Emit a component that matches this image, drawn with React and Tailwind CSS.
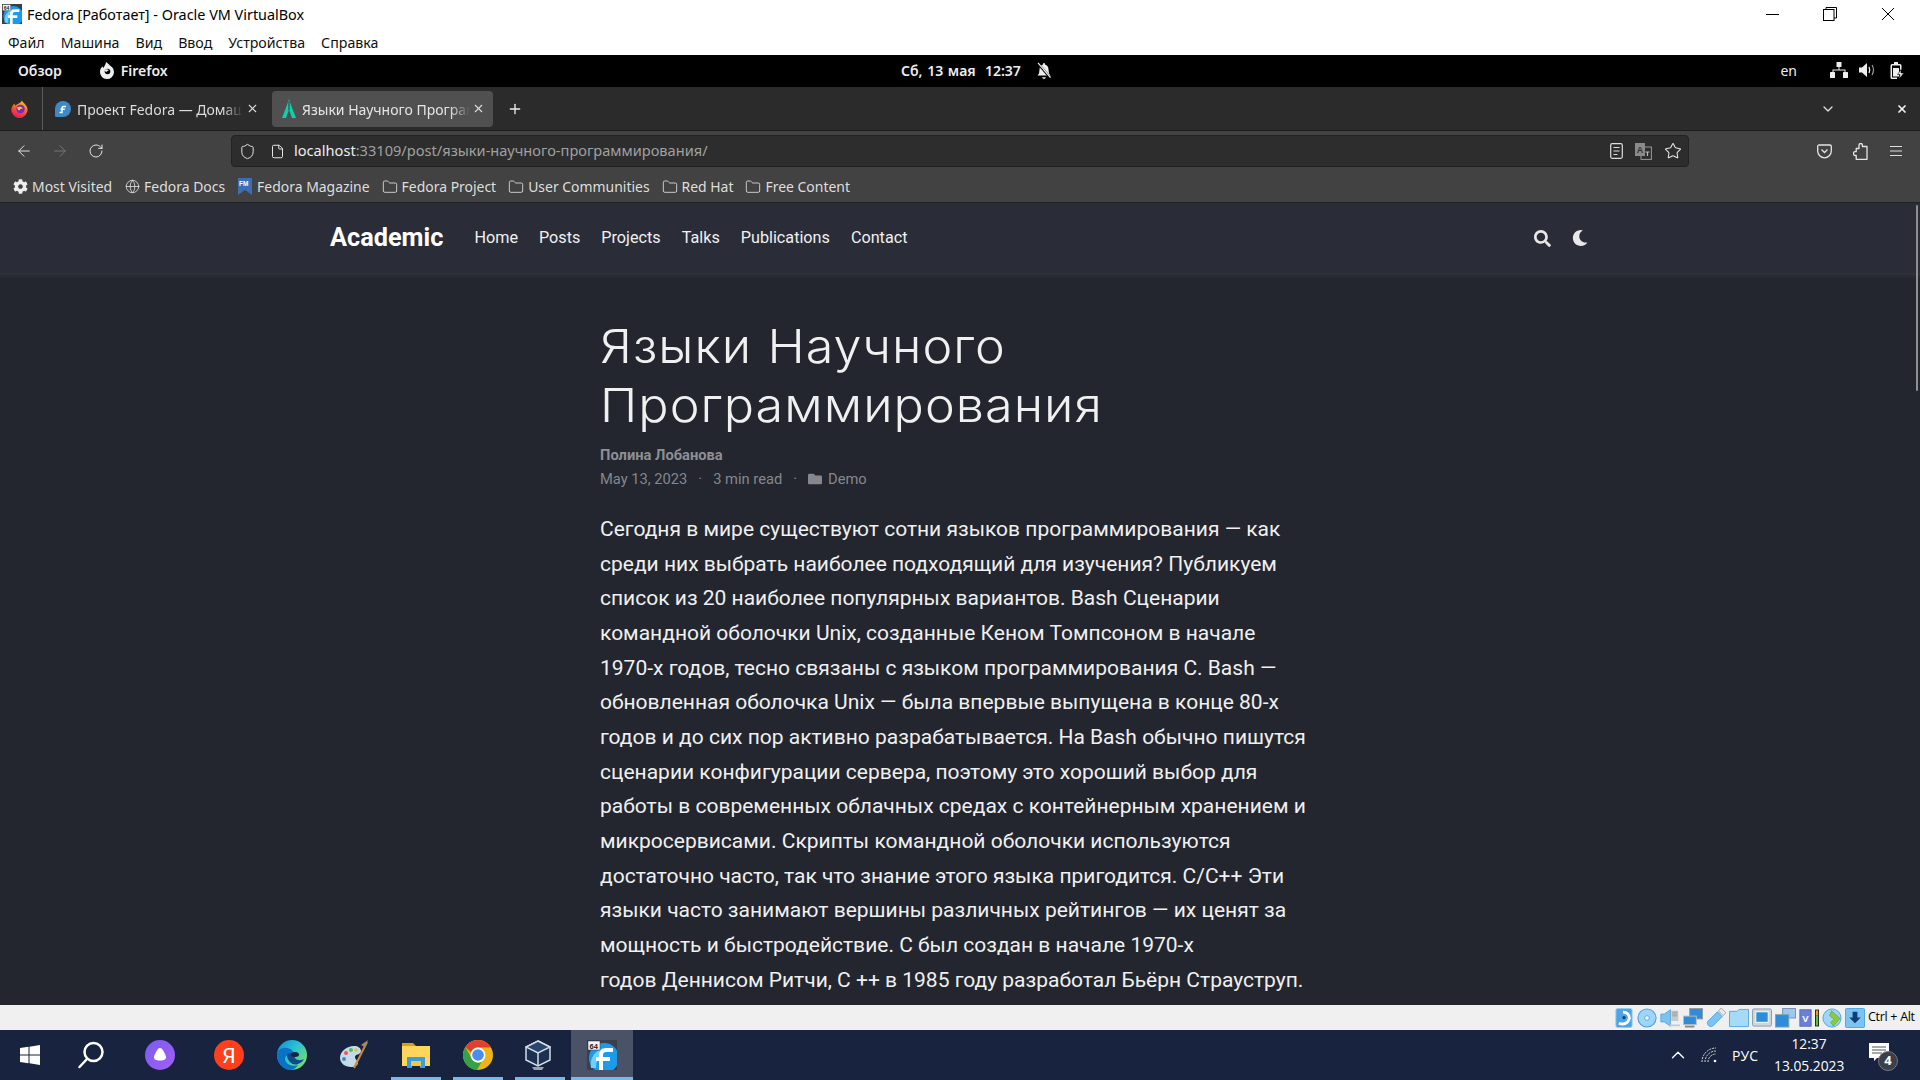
import React from "react";
import { ArrowLeft, ArrowRight, RotateCw, Shield, File, Star, Plus, X, ChevronDown, Globe, Folder, ChevronUp } from "lucide-react";
import { FaSearch, FaMoon, FaFolder, FaCog } from "react-icons/fa";

const lines = [
  "Сегодня в мире существуют сотни языков программирования — как",
  "среди них выбрать наиболее подходящий для изучения? Публикуем",
  "список из 20 наиболее популярных вариантов. Bash Сценарии",
  "командной оболочки Unix, созданные Кеном Томпсоном в начале",
  "1970-х годов, тесно связаны с языком программирования C. Bash —",
  "обновленная оболочка Unix — была впервые выпущена в конце 80-х",
  "годов и до сих пор активно разрабатывается. На Bash обычно пишутся",
  "сценарии конфигурации сервера, поэтому это хороший выбор для",
  "работы в современных облачных средах с контейнерным хранением и",
  "микросервисами. Скрипты командной оболочки используются",
  "достаточно часто, так что знание этого языка пригодится. C/C++ Эти",
  "языки часто занимают вершины различных рейтингов — их ценят за",
  "мощность и быстродействие. C был создан в начале 1970-х",
  "годов Деннисом Ритчи, C ++ в 1985 году разработал Бьёрн Страуструп.",
];

const FedoraBlue = ({ s = 16 }) => (
  <svg width={s} height={s} viewBox="0 0 16 16">
    <path d="M8 0a8 8 0 0 1 0 16H1.500A1.500 1.500 0 0 1 0 14.500V8a8 8 0 0 1 8-8z" fill="#3c8ac9" />
    <path d="M4.500 11.500H7V7.200a1.600 1.600 0 0 1 1.600-1.600H11M5.500 8.200H9.800" fill="none" stroke="#fff" strokeWidth="1.500" />
  </svg>
);

const VBoxFedora = ({ s = 24 }) => (
  <svg width={s} height={s} viewBox="0 0 30 30">
    <rect width="30" height="30" fill="#3a3f4d" />
    <circle cx="17" cy="18" r="15" fill="#1e9be8" />
    <path d="M4 28 Q2 14 16 8 L16 14 Q9 17 9 28z" fill="#6fd0fb" />
    <path d="M14 30V15a5 5 0 0 1 5-5h7M9 19h14" fill="none" stroke="#fff" strokeWidth="4" />
    <rect x="1" y="1" width="12" height="9" fill="#f5f5f5" stroke="#333" strokeWidth="0.500" />
    <text x="2.500" y="8.500" fontSize="7.500" fontWeight="700" fill="#222" fontFamily="Liberation Sans, sans-serif">64</text>
  </svg>
);

const FirefoxIcon = () => (
  <svg width="18" height="18" viewBox="0 0 18 18">
    <defs>
      <linearGradient id="ff" x1="0.7" y1="0" x2="0.3" y2="1">
        <stop offset="0" stopColor="#ffc02c" />
        <stop offset="0.5" stopColor="#ff5a2d" />
        <stop offset="1" stopColor="#e3145a" />
      </linearGradient>
    </defs>
    <path d="M11 0.500c.5 2 2.500 2.600 3.600 4.600C16.600 7 17 10 16 12.500A8 8 0 1 1 1.800 5.500C2.300 4.600 3 4 3.500 3.500c0 1 .3 1.600 1 2C6 3.800 9.500 3.500 11 .5z" fill="url(#ff)" />
    <circle cx="9.500" cy="9" r="4.200" fill="#6c2bd0" />
    <path d="M6 7.500c2-1.500 5-1 6 1-1.500 0-3 .5-3.500 2-1 .2-2-.8-2.500-3z" fill="#ffb92e" />
  </svg>
);

const AcademicIcon = () => (
  <svg width="16" height="20" viewBox="0 0 16 20">
    <path d="M8 0l2 6 5 13h-4L8 10.500 5 19H1L6 6z" fill="#0fd0a8" />
    <path d="M7.300 2h1.400v9H7.300z" fill="#2c5f5c" />
  </svg>
);

const Bell = () => (
  <svg width="16" height="17" viewBox="0 0 16 17" fill="#eee">
    <path d="M8 1a1 1 0 0 1 1 1v.6c2.200.6 3.500 2.500 3.500 5l.5 4 1.500 2H1.500l1.500-2 .5-4c0-2.500 1.300-4.400 3.500-5V2a1 1 0 0 1 1-1z" />
    <path d="M6 15.200h4l-1 1.500H7z" />
    <path d="M2 1.500l12 14" stroke="#000" strokeWidth="2.500" />
    <path d="M2 .8l12.500 14.700" stroke="#eee" strokeWidth="1.200" />
  </svg>
);

const Net = () => (
  <svg width="18" height="16" viewBox="0 0 18 16" fill="#eee">
    <rect x="6.500" y="0" width="5" height="5" rx="0.500" />
    <rect x="0" y="10" width="5" height="6" rx="0.500" />
    <rect x="13" y="10" width="5" height="6" rx="0.500" />
    <path d="M8.500 5h1v2.500h6V10h-1V8.500h-11V10h-1V7.500h6z" />
  </svg>
);

const Speaker = () => (
  <svg width="17" height="16" viewBox="0 0 17 16">
    <path d="M0 5.500h3L8 1v14l-5-4.500H0z" fill="#eee" />
    <path d="M10 5c1 2 1 4 0 6" stroke="#eee" strokeWidth="1.300" fill="none" />
    <path d="M13 3c1.800 3 1.800 7 0 10" stroke="#999" strokeWidth="1.200" fill="none" />
  </svg>
);

const Battery = () => (
  <svg width="15" height="17" viewBox="0 0 15 17">
    <path d="M4 0h4v2h2a1.500 1.500 0 0 1 1.500 1.500V8H10V3.500H2v12h5V17H2a1.500 1.500 0 0 1-1.500-1.500v-12A1.500 1.500 0 0 1 2 2h2z" fill="#eee" />
    <rect x="3" y="6" width="6" height="8.500" fill="#eee" />
    <path d="M11 7.500L7.500 12.500h2.500L9 17l5-6h-3z" fill="#eee" stroke="#000" strokeWidth="0.600" />
  </svg>
);

const SoftFirefox = () => (
  <svg width="16" height="17" viewBox="0 0 16 17">
    <path d="M8 3a7 7 0 1 1-7 6.500c.1-2 1-3.700 2.500-5l1 1.500C5.500 4 6.800 2.300 7 0c1.300 1.200 3 2 4.500 4-1-.6-2.200-1-3.500-1z" fill="#eee" />
    <circle cx="8.500" cy="9.500" r="2.800" fill="#000" />
    <path d="M5.500 8c1.500-1 3.500-.8 4.500.5-1 0-2 .5-2.500 1.500-.8 0-1.500-.8-2-2z" fill="#eee" />
  </svg>
);

const Reader = () => (
  <svg width="13" height="16" viewBox="0 0 13 16" fill="none" stroke="#ddd" strokeWidth="1.200">
    <rect x="0.700" y="0.700" width="11.600" height="14.600" rx="1.500" />
    <path d="M3.500 4.500h6M3.500 8h6M3.500 11.500h4" />
  </svg>
);

const Translate = () => (
  <svg width="17" height="17" viewBox="0 0 17 17">
    <rect x="6" y="4" width="10.400" height="12.400" fill="#2d2d2d" stroke="#999" strokeWidth="1" />
    <rect x="0" y="0" width="10" height="13" fill="#8a8a8a" />
    <text x="1.800" y="10" fontSize="9" fontWeight="700" fill="#333" fontFamily="Liberation Sans, sans-serif">A</text>
    <path d="M10.500 9h4M12.500 9v4" stroke="#bbb" strokeWidth="1.200" />
  </svg>
);

const Pocket = () => (
  <svg width="15" height="15" viewBox="0 0 15 15" fill="none" stroke="#e5e5e5" strokeWidth="1.300">
    <path d="M2 1h11a1.300 1.300 0 0 1 1.300 1.300V7a6.800 6.800 0 0 1-13.600 0V2.300A1.300 1.300 0 0 1 2 1z" />
    <path d="M4.500 5.500l3 3 3-3" />
  </svg>
);

const PuzzleIcon = () => (
  <svg width="15" height="17" viewBox="0 0 15 17" fill="none" stroke="#e5e5e5" strokeWidth="1.300" strokeLinejoin="round">
    <path d="M6 3.500V2.200a1.700 1.700 0 0 1 3.400 0v1.300H14v12.800H3.200v-3.800H2.300a1.900 1.900 0 0 1 0-3.800h.9V5.500L6 5.500z" />
  </svg>
);

const FMIcon = () => (
  <svg width="14" height="17" viewBox="0 0 14 17">
    <path d="M0 0h14v17l-7-5-7 5z" fill="#3c6eb4" />
    <text x="1" y="7.500" fontSize="6.500" fontWeight="700" fill="#fff" fontFamily="Liberation Sans, sans-serif">FM</text>
  </svg>
);

const WinLogo = () => (
  <svg width="20" height="20" viewBox="0 0 20 20" fill="#fff">
    <path d="M0 3l8.500-1.200v7.700H0zM9.500 1.700L20 0v9.500H9.500zM0 10.500h8.500v7.700L0 17zM9.500 10.500H20V20L9.500 18.300z" />
  </svg>
);

const SearchGlass = () => (
  <svg width="28" height="28" viewBox="0 0 28 28" fill="none" stroke="#fff" strokeWidth="2.500" strokeLinecap="round">
    <circle cx="16.500" cy="11" r="9" />
    <path d="M10 18L2.500 26" />
  </svg>
);

const Alice = () => (
  <svg width="30" height="30" viewBox="0 0 30 30">
    <defs>
      <linearGradient id="al" x1="0" y1="0" x2="1" y2="1">
        <stop offset="0" stopColor="#7a5cf0" />
        <stop offset="1" stopColor="#a45ef5" />
      </linearGradient>
    </defs>
    <circle cx="15" cy="15" r="15" fill="url(#al)" />
    <path d="M15 8c2 0 3 2 4.500 5 1.500 3 2 4.500 1 6-1 1.500-3.500 1.500-5.500 1.500s-4.500 0-5.500-1.500c-1-1.500-.5-3 1-6C12 10 13 8 15 8z" fill="#fff" />
  </svg>
);

const Yandex = () => (
  <svg width="30" height="30" viewBox="0 0 30 30">
    <circle cx="15" cy="15" r="15" fill="#fc3f1d" />
    <text x="15" y="23" textAnchor="middle" fontSize="21" fill="#fff" fontFamily="Roboto, sans-serif">Я</text>
  </svg>
);

const Edge = () => (
  <svg width="30" height="30" viewBox="0 0 30 30">
    <defs>
      <linearGradient id="eg" x1="0" y1="0" x2="1" y2="0.800">
        <stop offset="0" stopColor="#0e8dd6" />
        <stop offset="0.500" stopColor="#2bc3d2" />
        <stop offset="1" stopColor="#7ee05a" />
      </linearGradient>
    </defs>
    <circle cx="15" cy="15" r="15" fill="url(#eg)" />
    <path d="M0 15c0-5 5-8 10-7 5 1 7 4 7 7h-6c-4 1-4 6 0 9 3 2 7 2 10 1-2 3-5 5-8 5C6 30 0 23 0 15z" fill="#0a72c4" />
    <path d="M10 16c1 6 6 10 11 8 3-1 5-3 6-5-4 2-7 1-8 0-2-1-1-3 0-4 0-1-3-2-5-2-3 0-4 1-4 3z" fill="#114a8b" />
    <path d="M14 15a4 3 0 0 1 8 0c0 1-2 2-4 2-3 0-4-1-4-2z" fill="#182340" />
  </svg>
);

const Palette = () => (
  <svg width="30" height="30" viewBox="0 0 30 30">
    <path d="M1 18C1 11 8 6 15 6c4 0 7 2 7 5 0 4-6 3-6 6 0 3 3 3 3 6 0 2-3 4-7 4C6 27 1 23 1 18z" fill="#c5dbe8" />
    <circle cx="7" cy="13" r="2" fill="#e55" />
    <circle cx="12" cy="10" r="2" fill="#5b5" />
    <circle cx="17" cy="10" r="1.800" fill="#eb4" />
    <circle cx="5" cy="19" r="2" fill="#48c" />
    <path d="M28 2L15 28" stroke="#c58a3c" strokeWidth="2" />
    <path d="M29 0l-3 7-4-2z" fill="#a98a60" />
  </svg>
);

const Explorer = () => (
  <svg width="28" height="28" viewBox="0 0 28 28">
    <path d="M0 2h11l3 3H0z" fill="#d9a00f" />
    <rect x="0" y="5" width="28" height="20" fill="#ffd65c" />
    <path d="M5 27V16h18v11h-5v-7h-8v7z" fill="#3d9be0" />
    <rect x="9" y="20" width="10" height="5" fill="#f4c542" />
  </svg>
);

const Chrome = () => (
  <svg width="30" height="30" viewBox="0 0 30 30">
    <circle cx="15" cy="15" r="15" fill="#ecb41c" />
    <path d="M15 0a15 15 0 0 1 13 7.500H15a7.500 7.500 0 0 0-7 4.700L2.300 7A15 15 0 0 1 15 0z" fill="#e2402e" />
    <path d="M2.300 7L9 19l5 11A15 15 0 0 1 2.300 7z" fill="#34a249" />
    <path d="M9 19a7.500 7.500 0 0 0 9.500 3L14 30c-6-.3-9-4-11.700-8.500z" fill="#34a249" />
    <circle cx="15" cy="15" r="7.500" fill="#fff" />
    <circle cx="15" cy="15" r="5.800" fill="#4a8df0" />
  </svg>
);

const VBox = () => (
  <svg width="26" height="30" viewBox="0 0 26 30">
    <path d="M13 1l12 6v13l-12 6L1 20V7z" fill="#1c3152" stroke="#d5dde6" strokeWidth="1.500" />
    <path d="M13 1l12 6-12 6L1 7z" fill="#28466f" stroke="#d5dde6" strokeWidth="1.500" />
    <path d="M13 13v13" stroke="#d5dde6" strokeWidth="1.500" />
    <path d="M7 27h12l-2 3H9z" fill="#9aa3ad" />
  </svg>
);

const statusIcons = [
  <svg key="a" width="20" height="20" viewBox="0 0 21 21"><rect x="2" y="0.500" width="17" height="20" rx="2" fill="#4da3e6" stroke="#8fcdf5" /><path d="M5 16c5 2 10 0 11-5 .5-4-3-7-6.500-6.500" fill="none" stroke="#fff" strokeWidth="3" /><circle cx="10.500" cy="10" r="1.700" fill="#123e6e" /></svg>,
  <svg key="b" width="20" height="20" viewBox="0 0 21 21"><circle cx="10.500" cy="10.500" r="9.500" fill="#9fd6f7" stroke="#4da3e6" strokeWidth="1.200" /><circle cx="10.500" cy="10.500" r="2.500" fill="#eaf6fd" stroke="#5aa8de" /></svg>,
  <svg key="c" width="20" height="20" viewBox="0 0 23 21"><path d="M1 6h4l7-5v19l-7-5H1z" fill="#7cc4f0" stroke="#4da3e6" /><rect x="13" y="2" width="8" height="12" fill="#c9c9c9" /><path d="M14 4h6M14 6h6M14 8h6" stroke="#999" /><path d="M11 18h12v2H11z" fill="#c9c9c9" /></svg>,
  <svg key="d" width="20" height="20" viewBox="0 0 21 21"><rect x="7" y="0.500" width="13.500" height="11" fill="#2e8cdb" stroke="#9a9a9a" /><rect x="0.500" y="8.500" width="13.500" height="9" fill="#2e8cdb" stroke="#bdbdbd" /><path d="M2 18.500h10v2H2z" fill="#888" /></svg>,
  <svg key="e" width="20" height="20" viewBox="0 0 21 21"><path d="M2 14L12 4l5 5L7 19c-3 2-7-2-5-5z" fill="#7cc4f0" stroke="#4da3e6" /><path d="M13 3l3-3 5 5-3 3z" fill="#e9e9e9" stroke="#888" strokeWidth="0.700" /></svg>,
  <svg key="f" width="20" height="20" viewBox="0 0 21 21"><path d="M0.500 3.500h8l2-2h10v18h-20z" fill="#a6dbf8" stroke="#56a8e0" /></svg>,
  <svg key="g" width="20" height="20" viewBox="0 0 21 21"><rect x="0.500" y="1" width="20" height="18" rx="1.500" fill="#cfd6db" stroke="#8a9aa5" /><rect x="4" y="4" width="13" height="11" fill="#2e8cdb" stroke="#fff" /></svg>,
  <svg key="h" width="21" height="20" viewBox="0 0 22 21"><rect x="8" y="0.500" width="13.500" height="10" fill="#9fc6ee" stroke="#7a8fb0" /><rect x="0.500" y="7" width="14" height="13" fill="#2e8cdb" stroke="#7aa" /></svg>,
  <svg key="i" width="13" height="20" viewBox="0 0 15 21"><rect x="1" y="1" width="13" height="19" fill="#6b7fd8" stroke="#5064b8" /><text x="7.500" y="15" textAnchor="middle" fontSize="11" fontWeight="700" fill="#fff" fontFamily="Liberation Sans, sans-serif">V</text></svg>,
  <svg key="j" width="4" height="20" viewBox="0 0 5 21"><rect width="5" height="21" fill="#111" /><rect x="1" y="1" width="3" height="6" fill="#e9a020" /><rect x="1" y="7" width="3" height="13" fill="#5cc23c" /></svg>,
  <svg key="k" width="20" height="20" viewBox="0 0 21 21"><circle cx="10.500" cy="10.500" r="9.500" fill="#9fd6f7" stroke="#4da3e6" /><path d="M10 3l9 8-7 8-3-4 4-3-5-4z" fill="#8ccc3c" stroke="#5a9a20" strokeWidth="0.600" /></svg>,
  <svg key="l" width="20" height="20" viewBox="0 0 21 21"><rect x="0.500" y="0.500" width="20" height="20" rx="1" fill="#7cc4f0" stroke="#4da3e6" /><path d="M8 4h5v6h3.500l-6 6-6-6H8z" fill="#0f3d78" /></svg>,
];

const nav = ["Home", "Posts", "Projects", "Talks", "Publications", "Contact"];

const Bm = ({ icon, label }) => (
  <div className="flex items-center gap-[4px]">
    <span className="w-[16px] h-[16px] flex items-center justify-center">{icon}</span>
    <span>{label}</span>
  </div>
);

const TaskCell = ({ w, children, line, active }) => (
  <div className={`relative h-full flex items-center justify-center ${active ? "bg-[#4a5268]" : ""}`} style={{ width: w }}>
    {children}
    {line && <div className="absolute bottom-0 left-[6px] right-[6px] h-[3px] bg-[#76b9ed]" />}
    {active && <div className="absolute bottom-0 left-0 right-0 h-[3px] bg-[#76b9ed]" />}
  </div>
);

export default function App() {
  return (
    <div className="w-[1920px] h-[1080px] overflow-hidden flex flex-col relative bg-white font-['Noto_Sans',sans-serif]">
      {/* VirtualBox title bar */}
      <div className="h-[28px] bg-white flex items-center pl-[2px] text-[14.400px] text-black">
        <VBoxFedora s={20} />
        <span className="ml-[5px] mt-[1px]">Fedora [Работает] - Oracle VM VirtualBox</span>
        <div className="ml-auto flex items-center gap-[44px] pr-[25px]">
          <div className="w-[13px] h-px bg-black" />
          <svg width="14" height="14" viewBox="0 0 14 14" fill="none" stroke="#000"><rect x="0.500" y="2.500" width="10.500" height="11" /><path d="M3 2.500V.5h10.500v10.500H11" /></svg>
          <svg width="14" height="14" viewBox="0 0 14 14" stroke="#000"><path d="M1 1l12 12M13 1L1 13" /></svg>
        </div>
      </div>
      {/* Menu */}
      <div className="h-[27px] bg-white flex items-center pl-[8px] pt-[2px] gap-[16px] text-[14.200px] text-[#111]">
        {["Файл", "Машина", "Вид", "Ввод", "Устройства", "Справка"].map((m) => (
          <span key={m}>{m}</span>
        ))}
      </div>
      {/* GNOME bar */}
      <div className="h-[32px] bg-black relative flex items-center pb-[2px] text-[14px] font-semibold text-[#eeeeee]">
        <span className="ml-[18px]">Обзор</span>
        <div className="ml-[37px] flex items-center gap-[6px]">
          <SoftFirefox />
          <span>Firefox</span>
        </div>
        <div className="absolute left-[901px] top-0 h-full pb-[2px] flex items-center gap-[15px]">
          <span className="[word-spacing:1px]">Сб, 13 мая&nbsp; 12:37</span>
          <Bell />
        </div>
        <div className="ml-auto flex items-center pr-[15px]">
          <span className="font-normal mr-[33px]">en</span>
          <span className="mr-[11px]"><Net /></span>
          <span className="mr-[14px]"><Speaker /></span>
          <Battery />
        </div>
      </div>
      {/* Tabs */}
      <div className="h-[44px] bg-[#2b2b2b] border-b border-[#1c1c1c] flex items-center text-[14px] text-[#dcdcdc]">
        <div className="w-[43px] h-full flex items-center justify-center border-r border-[#5a5a5a] pr-[3px]">
          <FirefoxIcon />
        </div>
        <div className="w-[229px] h-[36px] flex items-center pl-[12px] gap-[6px]">
          <FedoraBlue />
          <span className="w-[166px] pt-[1px] overflow-hidden whitespace-nowrap [mask-image:linear-gradient(to_right,black_88%,transparent)]">Проект Fedora — Домашняя</span>
          <X size={13} className="ml-[-3px] text-[#ddd]" />
        </div>
        <div className="w-[221px] h-[36px] bg-[#505050] rounded-[4px] flex items-center pl-[9px] gap-[5px] text-[#e5e5e5]">
          <AcademicIcon />
          <span className="w-[168px] pt-[1px] overflow-hidden whitespace-nowrap [mask-image:linear-gradient(to_right,black_88%,transparent)]">Языки Научного Программирования</span>
          <X size={13} className="ml-[-3px] text-[#ddd]" />
        </div>
        <Plus size={16} className="ml-[14px] text-[#eee]" />
        <ChevronDown size={16} className="ml-auto text-[#ddd]" />
        <X size={12} strokeWidth={3.500} className="ml-[60px] mr-[12px] text-[#eee]" />
      </div>
      {/* Toolbar */}
      <div className="h-[36px] pt-[4px] bg-[#424242] flex items-center text-[#e5e5e5]">
        <ArrowLeft size={18} strokeWidth={1.300} className="ml-[15px]" />
        <ArrowRight size={18} strokeWidth={1.300} className="ml-[18px] text-[#777]" />
        <RotateCw size={16} strokeWidth={1.500} className="ml-[19px]" />
        <div className="ml-[127px] w-[1458px] h-[32px] bg-[#2d2d2d] border border-[#222] rounded-[4px] flex items-center pl-[7px] pr-[6px] text-[14.600px]">
          <Shield size={17} strokeWidth={1.400} />
          <File size={15} strokeWidth={1.600} className="ml-[14px]" />
          <span className="ml-[9px] text-[#eeeeee]">localhost<span className="text-[#a0a0a0]">:33109/post/языки-научного-программирования/</span></span>
          <div className="ml-auto flex items-center gap-[12px]">
            <Reader />
            <Translate />
            <Star size={18} strokeWidth={1.400} />
          </div>
        </div>
        <div className="ml-[128px] flex items-center gap-[21px]">
          <Pocket />
          <PuzzleIcon />
          <svg width="14" height="12" viewBox="0 0 14 12" stroke="#ddd"><path d="M1 1.500h12M1 6h12M1 10.500h12" /></svg>
        </div>
      </div>
      {/* Bookmarks */}
      <div className="h-[36px] pt-[5px] bg-[#424242] border-b border-[#222] flex items-center pl-[12px] gap-[12px] text-[13.950px] text-[#dedede]">
        <Bm icon={<FaCog size={15} color="#eee" />} label="Most Visited" />
        <Bm icon={<Globe size={15} strokeWidth={1.200} color="#eee" />} label="Fedora Docs" />
        <Bm icon={<FMIcon />} label="Fedora Magazine" />
        <Bm icon={<Folder size={16} strokeWidth={1.300} />} label="Fedora Project" />
        <Bm icon={<Folder size={16} strokeWidth={1.300} />} label="User Communities" />
        <Bm icon={<Folder size={16} strokeWidth={1.300} />} label="Red Hat" />
        <Bm icon={<Folder size={16} strokeWidth={1.300} />} label="Free Content" />
      </div>
      {/* Page */}
      <div className="flex-1 min-h-0 overflow-hidden relative bg-[#23262e] font-['Roboto',sans-serif]">
        <div className="h-[70px] bg-[#2a2c37] flex items-center pl-[330px]">
          <span className="text-[25.300px] font-bold text-white mr-[31px]">Academic</span>
          <div className="flex items-center gap-[21px] text-[16.200px] text-[#f0f0f0]">
            {nav.map((n) => (
              <span key={n}>{n}</span>
            ))}
          </div>
          <div className="ml-auto flex items-center gap-[21px] pr-[332px] text-[#e8e8e8]">
            <FaSearch size={17} />
            <FaMoon size={16} />
          </div>
        </div>
        <div className="h-[6px] bg-gradient-to-b from-[#30323c] to-[#23262e]" />
        <div className="pl-[600px] w-[1400px]">
          <h1 className="pt-[37px] text-[47px] leading-[59px] font-light tracking-[1px] text-[#f0f0f0] font-['Inter',sans-serif] origin-left scale-x-[1.07]">
            Языки Научного<br />Программирования
          </h1>
          <div className="mt-[11px] text-[14.700px] font-bold text-[#8e8f95] leading-[20px]">Полина Лобанова</div>
          <div className="mt-[4px] flex items-center text-[14.700px] text-[#85878d] leading-[20px]">
            <span>May 13, 2023</span>
            <span className="mx-[11px]">·</span>
            <span>3 min read</span>
            <span className="mx-[11px]">·</span>
            <FaFolder size={14} className="mr-[6px]" />
            <span>Demo</span>
          </div>
          <div className="mt-[23px] text-[21px] leading-[34.650px] text-[#f0f0f0]">
            {lines.map((l) => (
              <div key={l} className="whitespace-nowrap">{l}</div>
            ))}
          </div>
        </div>
        <div className="absolute right-[2px] top-[2px] w-[2px] h-[186px] bg-[#8f8f8f] rounded-full" />
      </div>
      {/* VBox status */}
      <div className="h-[25px] bg-[#f0f0f0] flex items-center justify-end gap-[3px] text-[12.500px] text-black overflow-hidden whitespace-nowrap font-['Open_Sans',sans-serif]">
        {statusIcons}
        <span className="ml-[0px] w-[52px] tracking-[-0.3px]">Ctrl + Alt</span>
      </div>
      {/* Taskbar */}
      <div className="h-[50px] bg-[#182340] flex items-center text-white">
        <TaskCell w={60}><WinLogo /></TaskCell>
        <TaskCell w={62}><SearchGlass /></TaskCell>
        <TaskCell w={76}><Alice /></TaskCell>
        <TaskCell w={62}><Yandex /></TaskCell>
        <TaskCell w={63}><Edge /></TaskCell>
        <TaskCell w={62}><Palette /></TaskCell>
        <TaskCell w={62} line><Explorer /></TaskCell>
        <TaskCell w={62} line><Chrome /></TaskCell>
        <TaskCell w={62} line><span className="mr-[4px]"><VBox /></span></TaskCell>
        <TaskCell w={62} active><VBoxFedora s={30} /></TaskCell>
        <div className="ml-auto h-full flex items-center">
          <ChevronUp size={22} strokeWidth={1.500} className="mr-[12px]" />
          <svg width="18" height="16" viewBox="0 0 18 16" fill="none" stroke="#ddd" className="mr-[13px]">
            <path d="M1 15A14 14 0 0 1 15 1M4 15A11 11 0 0 1 15 4M7 15A8 8 0 0 1 15 7" strokeDasharray="2 1" />
            <circle cx="14" cy="14" r="1.300" fill="#fff" stroke="none" />
          </svg>
          <span className="text-[14px] mr-[16px] font-['Open_Sans',sans-serif]">РУС</span>
          <div className="text-[13.800px] leading-[22px] text-center font-['Open_Sans',sans-serif] w-[70px] mr-[25px]">
            <div>12:37</div>
            <div>13.05.2023</div>
          </div>
          <div className="relative w-[24px] h-[24px] mr-[27px]">
            <svg width="20" height="18" viewBox="0 0 20 18"><path d="M0 0h20v15H8l-3 3v-3H0z" fill="#fff" /><path d="M3 4h14M3 7h14M3 10h10" stroke="#555" /></svg>
            <div className="absolute left-[9px] top-[8px] w-[20px] h-[20px] rounded-full bg-[#3a3f4a] border border-[#777] flex items-center justify-center text-[13px] font-bold font-['Open_Sans',sans-serif]">4</div>
          </div>
        </div>
      </div>
    </div>
  );
}
